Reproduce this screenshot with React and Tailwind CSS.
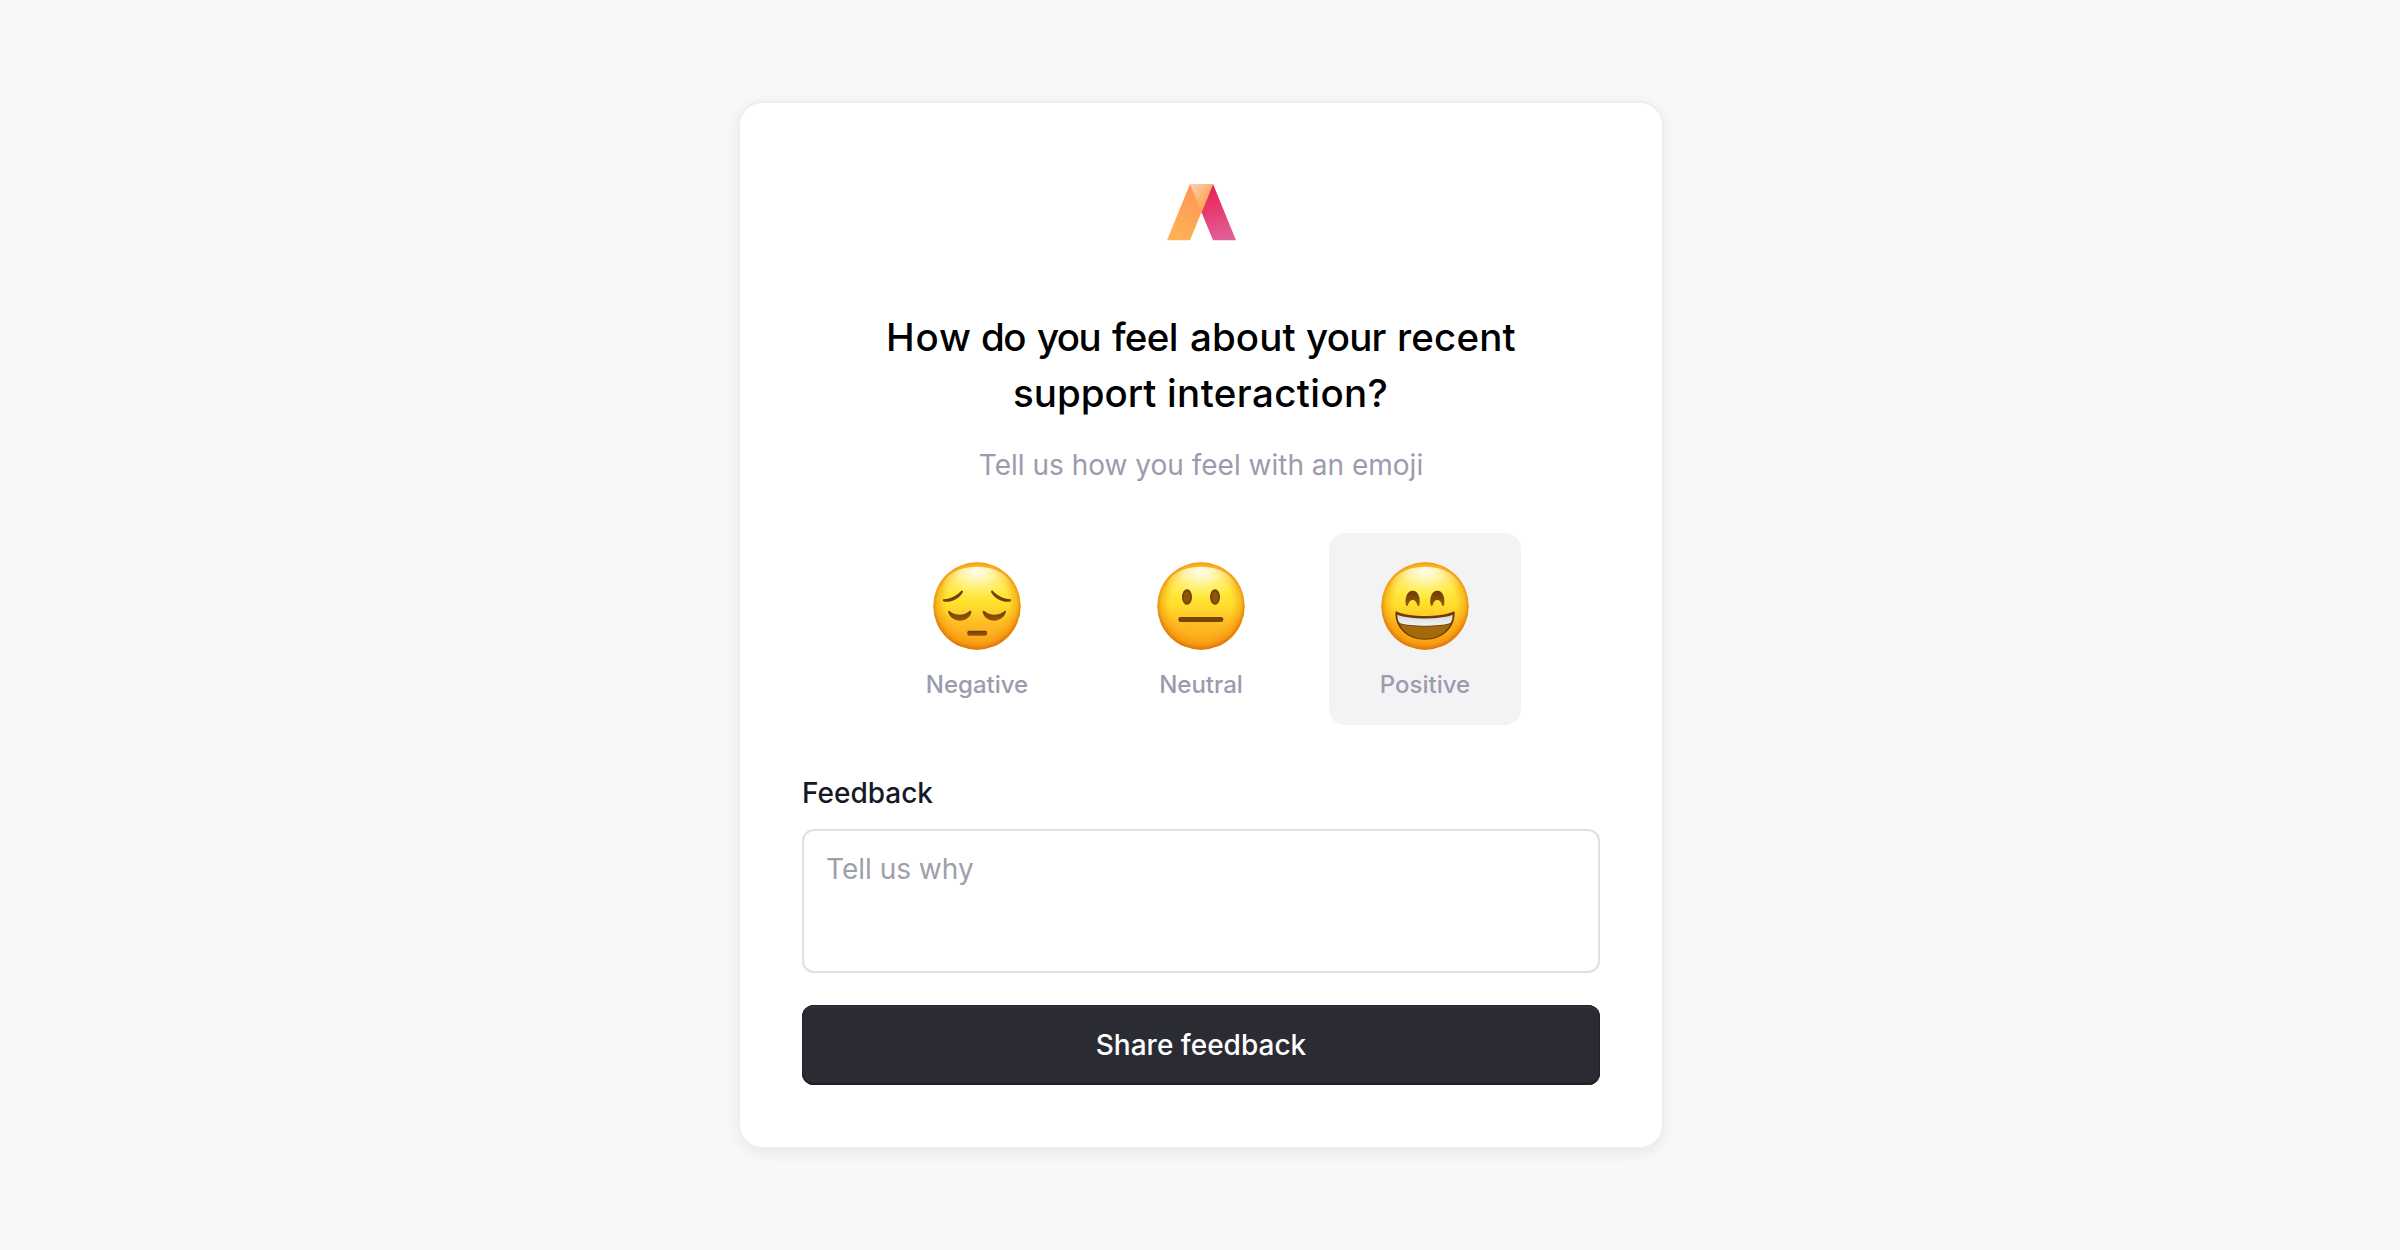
function Logo() {
  return (
    <svg className="block h-[58px] w-[70px]" viewBox="0 0 70 58">
      <defs>
        <linearGradient id="legL" x1="0.6" y1="0" x2="0.3" y2="1">
          <stop offset="0" stopColor="#ff9457" />
          <stop offset="1" stopColor="#ffb255" />
        </linearGradient>
        <linearGradient id="legR" x1="0.4" y1="0" x2="0.6" y2="1">
          <stop offset="0" stopColor="#ea1f50" />
          <stop offset="1" stopColor="#e0609a" />
        </linearGradient>
        <linearGradient id="fold" x1="0.1" y1="0" x2="0.75" y2="0.7">
          <stop offset="0" stopColor="#fdd0ad" />
          <stop offset="1" stopColor="#fda452" />
        </linearGradient>
      </defs>
      <path d="M24 1H47L24 57.3H1Z" fill="url(#legL)" />
      <path d="M47 1L70 57.3H47L35.5 29.2Z" fill="url(#legR)" />
      <path d="M24 1H47L35.5 29.2Z" fill="url(#fold)" />
    </svg>
  );
}

function FaceDefs() {
  return (
    <svg width="0" height="0" className="absolute">
      <defs>
        <linearGradient id="skin" x1="0" y1="0" x2="0" y2="1">
          <stop offset="0" stopColor="#ffc929" />
          <stop offset="0.3" stopColor="#ffe93a" />
          <stop offset="0.48" stopColor="#ffdf2e" />
          <stop offset="0.72" stopColor="#ffb921" />
          <stop offset="1" stopColor="#fba31c" />
        </linearGradient>
        <radialGradient id="rim" cx="0.5" cy="0.48" r="0.52">
          <stop offset="0.68" stopColor="#f59a08" stopOpacity="0" />
          <stop offset="0.88" stopColor="#f08f08" stopOpacity="0.5" />
          <stop offset="1" stopColor="#d87004" stopOpacity="0.98" />
        </radialGradient>
        <radialGradient id="shine" cx="0.5" cy="0.1" r="0.72">
          <stop offset="0" stopColor="#fffff2" stopOpacity="1" />
          <stop offset="0.35" stopColor="#fffcc8" stopOpacity="0.75" />
          <stop offset="1" stopColor="#ffee50" stopOpacity="0" />
        </radialGradient>
        <linearGradient id="ink" x1="0" y1="0" x2="0" y2="1">
          <stop offset="0" stopColor="#6e3a06" />
          <stop offset="1" stopColor="#945a08" />
        </linearGradient>
        <linearGradient id="teeth" x1="0" y1="0" x2="0" y2="1">
          <stop offset="0" stopColor="#d5d8dc" />
          <stop offset="1" stopColor="#f2f3f4" />
        </linearGradient>
      </defs>
    </svg>
  );
}

function Face({ children }) {
  return (
    <svg className="block size-[88px]" viewBox="-132 -132 264 264">
      <circle r="131" fill="url(#skin)" />
      <circle r="131" fill="url(#rim)" />
      <ellipse cy="-52" rx="104" ry="66" fill="url(#shine)" />
      {children}
    </svg>
  );
}

function Negative() {
  const half = (
    <>
      <path d="M-101 -20C-78 -21 -61 -31 -48 -45C-44 -48 -41 -45 -43 -40C-56 -20 -79 -10 -98 -13C-103 -14 -104 -19 -101 -20Z" fill="#74400a" />
      <path d="M-87 16C-86 13 -83 14 -80 17C-64 29 -40 29 -25 17C-21 13 -17 13 -17 17C-18 31 -34 44 -52 44C-70 44 -85 31 -87 16Z" fill="url(#ink)" />
    </>
  );
  return (
    <Face>
      {half}
      <g transform="scale(-1 1)">{half}</g>
      <rect x="-29" y="74" width="59" height="15" rx="5" fill="url(#ink)" />
    </Face>
  );
}

function Neutral() {
  return (
    <Face>
      <ellipse cx="-42" cy="-27" rx="15" ry="23" fill="#74400a" />
      <ellipse cx="-42" cy="-26" rx="10" ry="18" fill="#8d5508" />
      <ellipse cx="42" cy="-27" rx="15" ry="23" fill="#74400a" />
      <ellipse cx="42" cy="-26" rx="10" ry="18" fill="#8d5508" />
      <rect x="-68" y="33" width="135" height="15" rx="7" fill="#7a4408" />
    </Face>
  );
}

function Positive() {
  const eye = (
    <path d="M-57 -3C-62 -22 -54 -46 -37 -46C-20 -46 -12 -22 -17 -3C-19 2 -22 0 -23 -3C-26 -13 -30 -18 -37 -18C-44 -18 -48 -13 -51 -3C-52 0 -55 2 -57 -3Z" fill="url(#ink)" />
  );
  return (
    <Face>
      {eye}
      <g transform="scale(-1 1)">{eye}</g>
      <path d="M-89 20C-89 16 -86 16 -82 18C-45 34 45 34 82 18C86 16 89 16 89 20C90 66 52 101 0 101C-52 101 -90 66 -89 20Z" fill="#6f3a06" />
      <path d="M-76 54C-45 64 45 64 76 54C62 82 36 98 0 98C-36 98 -62 82 -76 54Z" fill="#a3690a" />
      <path d="M-83 26C-45 41 45 41 83 26C83 38 80 46 76 51C45 62 -45 62 -76 51C-80 46 -83 38 -83 26Z" fill="url(#teeth)" />
    </Face>
  );
}

const moods = [
  { label: "Negative", Icon: Negative },
  { label: "Neutral", Icon: Neutral },
  { label: "Positive", Icon: Positive, selected: true },
];

export default function App() {
  return (
    <main className="flex h-[1250px] w-full justify-center overflow-hidden bg-[#f8f8fa] pt-[103px] font-['Inter',sans-serif]">
      <FaceDefs />
      <section className="ml-[2px] flex h-[1044px] w-[922px] flex-col items-center rounded-[22px] bg-white px-[62px] pt-[80px] shadow-[0_0_0_2px_#eeeef2,0_4px_16px_rgba(30,30,50,0.09)]">
        <Logo />
        <h1 className="mt-[68px] flex flex-col items-center text-[38.5px] leading-[56px] font-medium whitespace-pre text-black">
          <span className="flex w-[630px]">
            <span className="w-[95px] tracking-[0.8px]">How </span>
            <span className="w-[56px] tracking-[-1.6px]">do </span>
            <span className="w-[75px] tracking-[-1.6px]">you </span>
            <span className="w-[78px] tracking-[-0.7px]">feel </span>
            <span className="w-[116px] tracking-[0.1px]">about </span>
            <span className="w-[91px] tracking-[-0.75px]">your </span>
            <span className="tracking-[0.15px]">recent</span>
          </span>
          <span className="flex w-[376px]">
            <span className="w-[154px]">support </span>
            <span className="tracking-[0.4px]">interaction?</span>
          </span>
        </h1>
        <p className="mt-[24px] text-[28px] leading-[40px] text-[#9c9bad]">Tell us how you feel with an emoji</p>
        <div className="mt-[48px] flex gap-8">
          {moods.map(({ label, Icon, selected }) => (
            <button
              key={label}
              className={
                "flex size-[192px] flex-col items-center rounded-2xl pt-[28.5px] " + (selected ? "bg-[#f3f3f6]" : "")
              }
            >
              <Icon />
              <span className="mt-[19px] text-[24px] leading-[32px] font-medium text-[#9c9bad]">{label}</span>
            </button>
          ))}
        </div>
        <label className="mt-[48px] w-full text-[28px] leading-[40px] font-medium text-[#151826]">Feedback</label>
        <textarea
          placeholder="Tell us why"
          className="mt-[16px] block h-[144px] w-full resize-none rounded-xl border-2 border-[#dee0e8] bg-white px-[22px] py-[18px] text-[28px] leading-[40px] placeholder:text-[#9da0ab]"
        />
        <button className="mt-[32px] h-[80px] w-full rounded-xl bg-[#2b2b34] text-[28px] leading-[40px] font-medium text-white shadow-[inset_0_0_0_1px_#22232e,inset_0_-2px_1px_#1d1d27,inset_0_3px_2px_#31333a]">
          Share feedback
        </button>
      </section>
    </main>
  );
}
